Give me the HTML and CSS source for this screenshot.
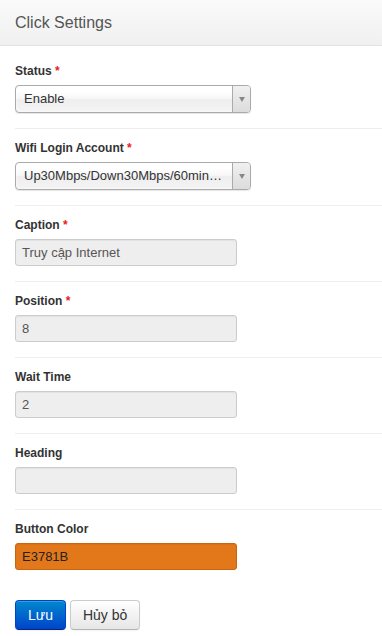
FILE: index.html
```html
<!DOCTYPE html>
<html lang="vi">
<head>
    <meta charset="UTF-8">
    <meta name="viewport" content="width=device-width, initial-scale=1.0">
    <title>Click Settings</title>
    <link rel="stylesheet" href="styles.css">
</head>
<body>

<div class="box">
    <div class="box-header">Click Settings</div>
    <div class="box-content">
        <div class="group">
            <label class="label">Status <span class="req">*</span></label>
            <div class="chosen">
                <span class="chosen-text">Enable</span>
                <span class="chosen-arrow"><b></b></span>
            </div>
        </div>
        <div class="group">
            <label class="label">Wifi Login Account <span class="req">*</span></label>
            <div class="chosen">
                <span class="chosen-text">Up30Mbps/Down30Mbps/60min…</span>
                <span class="chosen-arrow"><b></b></span>
            </div>
        </div>
        <div class="group">
            <label class="label">Caption <span class="req">*</span></label>
            <input type="text" class="inp" value="Truy cập Internet" readonly>
        </div>
        <div class="group">
            <label class="label">Position <span class="req">*</span></label>
            <input type="text" class="inp" value="8" readonly>
        </div>
        <div class="group">
            <label class="label">Wait Time</label>
            <input type="text" class="inp" value="2" readonly>
        </div>
        <div class="group">
            <label class="label">Heading</label>
            <input type="text" class="inp" value="" readonly>
        </div>
        <div class="group last">
            <label class="label">Button Color</label>
            <input type="text" class="inp color" value="E3781B" readonly>
        </div>
        <div class="actions">
            <button class="btn btn-primary">Lưu</button>
            <button class="btn">Hủy bỏ</button>
        </div>
    </div>
</div>

</body>
</html>
```

FILE: styles.css
```css
* {margin:0;padding:0;box-sizing:border-box;}
html,body {width:100%;height:100%;}
body {
    font-family: "Liberation Sans", Arial, sans-serif;
    color: #333;
    background: #fff;
}

.box-header {
    height: 46px;
    line-height: 45px;
    padding-left: 15px;
    font-size: 16px;
    color: #555;
    background: linear-gradient(#fafafa, #f0f0f0);
    border-bottom: 1px solid #e3e3e3;
}
.box-content {
    padding-top: 6px;
    padding-left: 15px;
}

.group {
    padding: 10px 0 15px;
    border-bottom: 1px solid #eee;
}
.group.last {
    border-bottom: 0;
}
.label {
    display: block;
    font-size: 12px;
    font-weight: bold;
    line-height: 18px;
    margin-bottom: 5px;
}
.req {
    color: #e81c1c;
}

/* chosen select */
.chosen {
    display: flex;
    width: 236px;
    height: 28px;
    border: 1px solid #aaa;
    border-radius: 4px;
    background: linear-gradient(#fff 20%, #f6f6f6 50%, #eee 52%, #f4f4f4 100%);
    box-shadow: 0 0 3px #fff inset, 0 1px 1px rgba(0,0,0,0.1);
    overflow: hidden;
}
.chosen-text {
    flex: 1;
    min-width: 0;
    padding-left: 8px;
    padding-right: 6px;
    font-size: 13px;
    line-height: 26px;
    color: #333;
    white-space: nowrap;
}
.chosen-arrow {
    width: 18px;
    display: flex;
    align-items: center;
    justify-content: center;
    border-left: 1px solid #aaa;
    background: linear-gradient(#f0f0f0, #dcdcdc);
}
.chosen-arrow b {
    width: 0;
    height: 0;
    border-left: 3px solid transparent;
    border-right: 3px solid transparent;
    border-top: 5px solid #888;
}

.inp {
    display: block;
    width: 222px;
    height: 27px;
    padding: 0 6px;
    font-family: "Liberation Sans", Arial, sans-serif;
    font-size: 13px;
    color: #555;
    background: #eee;
    border: 1px solid #ccc;
    border-radius: 3px;
    outline: 0;
    box-shadow: inset 0 1px 1px rgba(0,0,0,0.05);
}
.inp.color {
    background: #e3781b;
    border-color: #c8650f;
    color: #222;
}

.actions {
    padding-top: 15px;
    display: flex;
    gap: 4px;
}
.btn {
    height: 30px;
    padding: 0 12px;
    font-family: "Liberation Sans", Arial, sans-serif;
    font-size: 14px;
    color: #333;
    background: linear-gradient(#fff, #e6e6e6);
    border: 1px solid #ccc;
    border-bottom-color: #b3b3b3;
    border-radius: 4px;
    box-shadow: inset 0 1px 0 rgba(255,255,255,0.2), 0 1px 2px rgba(0,0,0,0.05);
    cursor: pointer;
}
.btn-primary {
    color: #fff;
    background: linear-gradient(#0088cc, #0044cc);
    border-color: #0044cc #0044cc #002a80;
}
```
